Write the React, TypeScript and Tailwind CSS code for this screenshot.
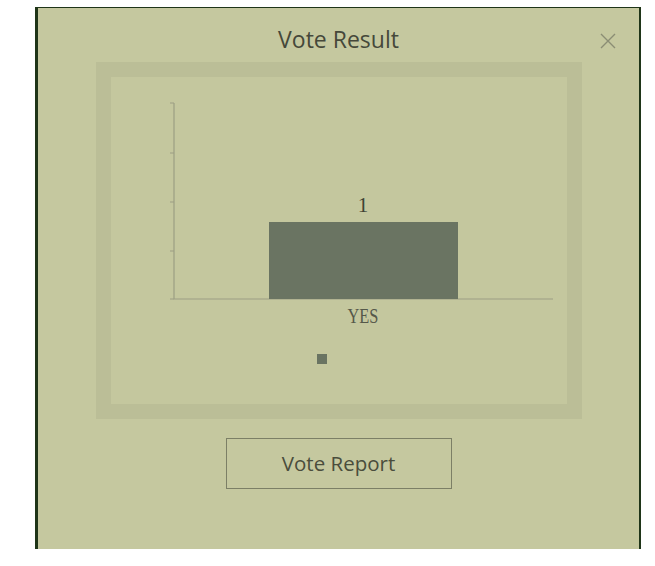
export default function App() {
  return (
    <div className="w-[655px] h-[566px] bg-white overflow-hidden">
      <div className="ml-[35px] mt-[7px] w-[606px] h-[542px] bg-[#c5c89f] border-l-[3px] border-t-[1px] border-r-[2px] border-[#1f3518] flex flex-col items-center">
        <div className="relative w-full h-[54px] flex items-center justify-center">
          <span className="text-[23px] text-[#45483a] font-['Open_Sans',sans-serif] leading-none pt-[9px]">Vote Result</span>
          <svg className="absolute right-[22px] top-[24px]" width="18" height="18" viewBox="0 0 18 18">
            <path d="M2 2L16 16M16 2L2 16" stroke="#8b8d74" strokeWidth="1.4" fill="none" />
          </svg>
        </div>
        <div className="w-[486px] h-[357px] bg-[#bbbe97] p-[15px]">
          <div className="w-full h-full bg-[#c4c79e]">
            <svg width="456" height="327" viewBox="0 0 456 327">
              <g stroke="#9c9e84" strokeWidth="1.2" fill="none">
                <path d="M63 26V222H442" />
                <path d="M59 26H63M59 76H63M59 125H63M59 174H63M59 222H63" />
              </g>
              <rect x="158" y="145" width="189" height="77" fill="#6a7462" />
              <text x="252" y="135" textAnchor="middle" fontFamily="'Liberation Serif', serif" fontSize="21" fill="#3f4234">1</text>
              <text x="252" y="246" textAnchor="middle" fontFamily="'Liberation Serif', serif" fontSize="21" fill="#55584a" transform="translate(252 0) scale(0.78 1) translate(-252 0)">YES</text>
              <rect x="206" y="277" width="10" height="10" fill="#6a7462" />
            </svg>
          </div>
        </div>
        <button className="mt-[19px] w-[226px] h-[51px] border border-[#7c7f66] text-[20.5px] text-[#4a4d3c] font-['Open_Sans',sans-serif]">
          Vote Report
        </button>
      </div>
    </div>
  );
}
